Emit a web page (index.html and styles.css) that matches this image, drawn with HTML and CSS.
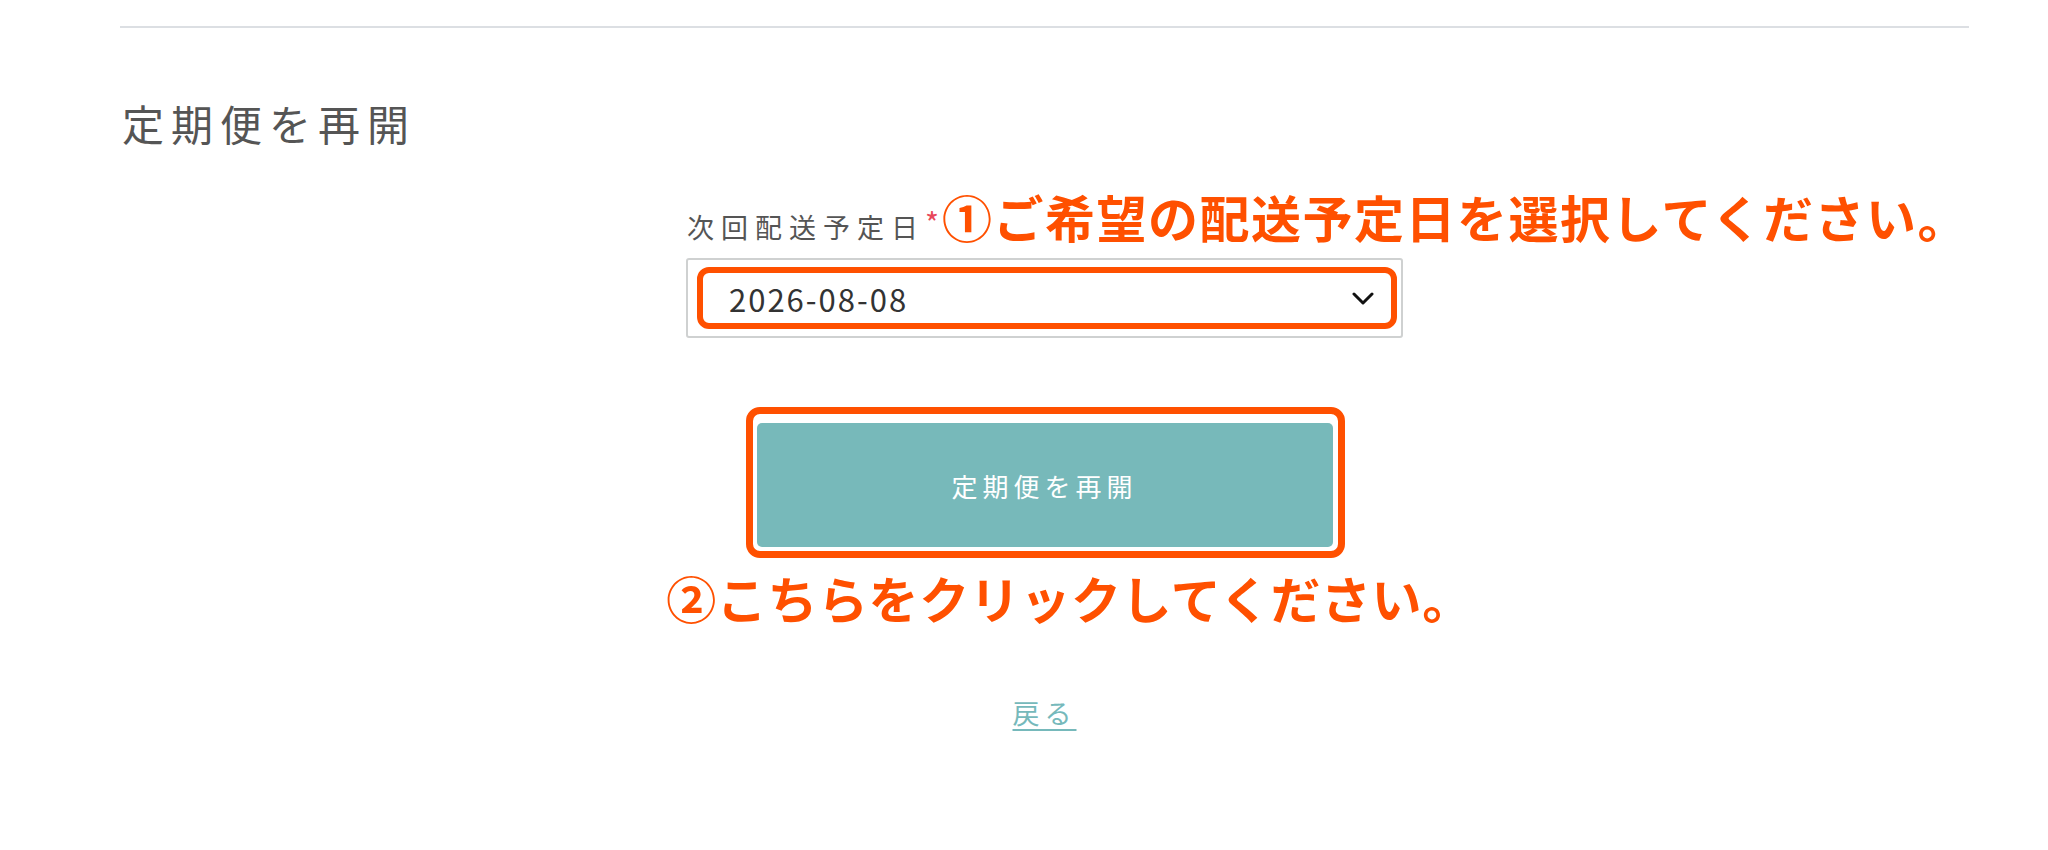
FILE: index.html
```html
<!DOCTYPE html>
<html lang="ja">

<head>
    <meta charset="UTF-8">
    <meta name="viewport" content="width=device-width, initial-scale=1.0">
    <title>定期便を再開</title>
    <link rel="stylesheet" href="styles.css">
</head>

<body>

    <div class="page">
        <hr class="rule">

        <h2 class="title">定期便を再開</h2>

        <form class="resume-form" onsubmit="return false;">
            <div class="label-row">
                <label class="label" for="nextDate">次回配送予定日<span class="req">*</span></label>
                <span class="note note-1">①ご希望の配送予定日を選択してください。</span>
            </div>

            <div class="select-wrap">
                <select id="nextDate" class="date-select">
                    <option>2026-08-08</option>
                    <option>2026-08-15</option>
                    <option>2026-08-22</option>
                </select>
                <svg class="chev" width="22" height="14" viewBox="0 0 22 14">
                    <path d="M2 2 L11 11 L20 2" fill="none" stroke="#111" stroke-width="3" stroke-linecap="round" stroke-linejoin="round" />
                </svg>
                <!-- annotation frame -->
                <span class="mark mark-select"></span>
            </div>

            <div class="btn-wrap">
                <button type="submit" class="submit">定期便を再開</button>
                <span class="mark mark-btn"></span>
            </div>

            <p class="note note-2">②こちらをクリックしてください。</p>

            <a href="#" class="back">戻る</a>
        </form>
    </div>

</body>

</html>
```

FILE: styles.css
```css
body {
    margin: 0;
    padding: 0;
    background-color: #fff;
    color: #555;
    font-family: "Noto Sans CJK JP", "Noto Sans", sans-serif;
}

.page {
    width: 1849px;
    margin-left: 120px;
    padding-top: 26px;
}

.rule {
    border: 0;
    border-top: 2px solid #dcdfe3;
    margin: 0;
}

.title {
    font-size: 42px;
    font-weight: 400;
    letter-spacing: 7px;
    line-height: 1.2;
    margin: 70px 0 0 2px;
}

.resume-form {
    width: 717px;
    margin: 38px auto 0;
    padding-bottom: 80px;
}

.label-row {
    display: flex;
    align-items: baseline;
    white-space: nowrap;
    line-height: 1.2;
}

.label {
    font-size: 27px;
    letter-spacing: 7px;
    padding-left: 1px;
}

.req {
    color: #e8485a;
    font-size: 30px;
    letter-spacing: 0;
    position: relative;
    top: -3px;
}

.note {
    color: #ff5000;
    font-weight: 700;
    font-size: 50px;
    letter-spacing: 1.5px;
    line-height: 1.2;
}

.note-1 {
    margin-left: 3px;
}

.select-wrap {
    position: relative;
    height: 80px;
    margin-top: 12px;
}

.date-select {
    appearance: none;
    -webkit-appearance: none;
    width: 100%;
    height: 80px;
    box-sizing: border-box;
    border: 2px solid #cfd1d1;
    border-radius: 3px;
    background-color: #fff;
    padding: 0 0 0 41px;
    font-family: inherit;
    font-size: 31px;
    letter-spacing: 2px;
    color: #333;
}

.chev {
    position: absolute;
    right: 29px;
    top: 34px;
    pointer-events: none;
}

.mark {
    position: absolute;
    border: 6px solid #ff5000;
    pointer-events: none;
}

.mark-select {
    left: 11px;
    top: 9px;
    right: 6px;
    bottom: 9px;
    border-radius: 12px;
}

.btn-wrap {
    position: relative;
    width: 576px;
    height: 124px;
    margin: 85px auto 0;
}

.submit {
    width: 100%;
    height: 124px;
    border: none;
    border-radius: 5px;
    background-color: #77b9ba;
    color: #fff;
    font-family: inherit;
    font-size: 26px;
    letter-spacing: 5px;
    cursor: pointer;
}

.submit:hover {
    background-color: #6aafb0;
}

.mark-btn {
    left: -11px;
    top: -16px;
    right: -12px;
    bottom: -11px;
    border-width: 7px;
    border-radius: 14px;
}

.note-2 {
    text-align: center;
    white-space: nowrap;
    letter-spacing: 0.6px;
    margin: 20px -120px 0;
    padding-left: 50px;
}

.back {
    display: table;
    margin: 66px auto 0;
    font-size: 27px;
    letter-spacing: 5px;
    color: #76b9bb;
    text-decoration: underline;
    text-underline-offset: 5px;
}
```
